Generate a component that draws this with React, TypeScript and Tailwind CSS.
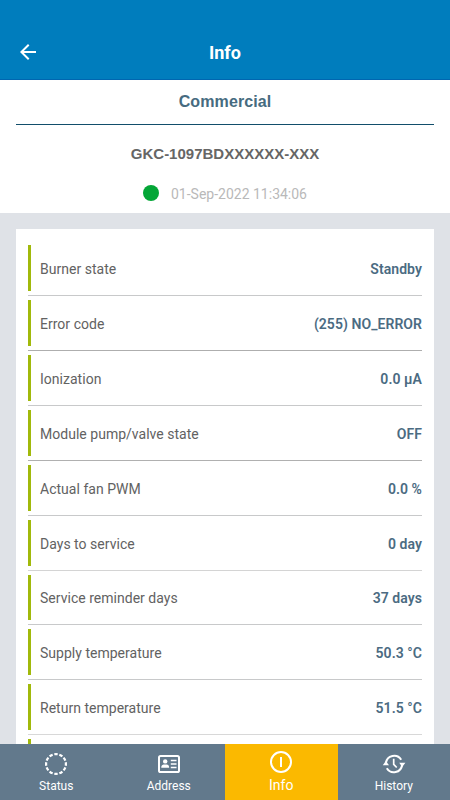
const rows = [
  { label: 'Burner state', value: 'Standby', size: 'h-[55px]', line: 'border-[#c8c9ca]' },
  { label: 'Error code', value: '(255) NO_ERROR', size: 'h-[55px]', line: 'border-[#aeaeae]' },
  { label: 'Ionization', value: '0.0 µA', size: 'h-[55px]', line: 'border-[#c8c9ca]' },
  { label: 'Module pump/valve state', value: 'OFF', size: 'h-[55px]', line: 'border-[#b0b0b0]' },
  { label: 'Actual fan PWM', value: '0.0 %', size: 'h-[55px]', line: 'border-[#c8c9ca]' },
  { label: 'Days to service', value: '0 day', size: 'h-[55px]', line: 'border-[#d4d4d4]' },
  { label: 'Service reminder days', value: '37 days', size: 'h-[54px]', line: 'border-[#c8c9ca]' },
  { label: 'Supply temperature', value: '50.3 °C', size: 'h-[55px]', line: 'border-[#c8c9ca]' },
  { label: 'Return temperature', value: '51.5 °C', size: 'h-[55px]', line: 'border-[#d8d8d8]' },
  { label: '', value: '', size: 'h-[55px]', line: 'border-[#c8c9ca]' },
];

function StatusIcon() {
  return (
    <svg width="24" height="24" viewBox="0 0 24 24" fill="none" stroke="white" strokeWidth="2.2">
      <circle cx="12" cy="12" r="9.900" pathLength="60" strokeDasharray="3.400 1.600" strokeDashoffset="1.700" />
    </svg>
  );
}

function AddressIcon() {
  return (
    <svg width="24" height="24" viewBox="0 0 24 24" fill="none" stroke="white">
      <rect x="2" y="4" width="20" height="16" rx="1.6" strokeWidth="2" />
      <circle cx="8.2" cy="9.4" r="2.2" fill="white" stroke="none" />
      <path d="M4.300 15.800v-.8c0-1.500 1.300-2.200 2.400-2.400h3c1.300.2 2.400.9 2.400 2.400v.8z" fill="white" stroke="none" />
      <path d="M13.800 8.500h5.700M13.800 12h5.700M13.800 15.500h5.700" strokeWidth="1.300" />
    </svg>
  );
}

function InfoIcon() {
  return (
    <svg width="24" height="24" viewBox="0 0 24 24" fill="none" stroke="white" strokeWidth="2">
      <circle cx="12" cy="12" r="10" />
      <path d="M12 7v10" />
    </svg>
  );
}

function HistoryIcon() {
  return (
    <svg width="24" height="24" viewBox="0 0 24 24" fill="none" stroke="white" strokeWidth="2">
      <path d="M3.900 11a8.300 8.300 0 0 1 15.300-3.300M20.100 13a8.300 8.300 0 0 1-15.300 3.300" />
      <path d="M.8 13.200h6.200l-3.200-4.200zM17.200 10.800h6.200l-3.200 4.200z" fill="white" stroke="none" />
      <path d="M11.700 6.800v5.500l3 3.200" strokeWidth="1.700" />
    </svg>
  );
}

const tabs = [
  { label: 'Status', icon: <StatusIcon /> },
  { label: 'Address', icon: <AddressIcon /> },
  { label: 'Info', icon: <InfoIcon />, active: true },
  { label: 'History', icon: <HistoryIcon /> },
];

export default function App() {
  return (
    <div className="flex h-[800px] w-[450px] flex-col overflow-hidden bg-white font-[Roboto,sans-serif]">
      <header className="grid h-20 shrink-0 grid-cols-[56px_1fr_56px] items-center border-b border-[#0066b0] bg-[#007dbd] pt-[25px] text-white">
        <button aria-label="Back" className="flex justify-center">
          <svg width="24" height="24" viewBox="0 0 24 24" fill="white">
            <path d="M20 11H7.830l5.590-5.590L12 4l-8 8 8 8 1.410-1.410L7.830 13H20v-2z" />
          </svg>
        </button>
        <h1 className="pt-[2px] text-center text-[18px] font-bold leading-6">Info</h1>
      </header>
      <section className="h-[133px] shrink-0 px-4 text-center">
        <h2 className="h-[45px] border-b border-[#124e6b] pt-[10px] font-['Liberation_Sans',sans-serif] text-[16px] font-bold leading-6 tracking-[0.1px] text-[#466b80]">Commercial</h2>
        <p className="mt-[17px] font-['Liberation_Sans',sans-serif] text-[15px] font-bold leading-6 text-[#666666]">GKC-1097BDXXXXXX-XXX</p>
        <div className="mt-[15px] flex items-start justify-center gap-3">
          <span className="mt-1 size-4 rounded-full bg-[#04a637]" />
          <span className="pt-px text-[14px] leading-6 text-[#b9b9b9]">01-Sep-2022 11:34:06</span>
        </div>
      </section>
      <main className="min-h-0 flex-1 overflow-hidden bg-[#dfe2e7] px-4 pt-4">
        <div className="bg-white px-3 pt-3">
          {rows.map((row, i) => (
            <div key={i} className={`flex border-b pb-1 pt-[4px] ${row.size} ${row.line}`}>
              <span className="w-[3px] bg-[#a1b90b]" />
              <div className="flex flex-1 items-center justify-between pl-[9px] pt-[2px] text-[14px]">
                <span className="tracking-[0.02px] text-[#626262]">{row.label}</span>
                <span className="font-semibold tracking-[0.06px] text-[#4b6b82]">{row.value}</span>
              </div>
            </div>
          ))}
        </div>
      </main>
      <nav className="grid h-14 shrink-0 grid-cols-4 bg-[#62798c] text-white">
        {tabs.map((tab) => (
          <button key={tab.label} className={`flex flex-col items-center ${tab.active ? 'bg-[#fbb900] pt-[6px] text-[14px]' : 'pt-2 text-[12px]'}`}>
            {tab.icon}
            <span className={`leading-[17px] ${tab.active ? 'mt-[3px]' : 'mt-[2px]'}`}>{tab.label}</span>
          </button>
        ))}
      </nav>
    </div>
  );
}
